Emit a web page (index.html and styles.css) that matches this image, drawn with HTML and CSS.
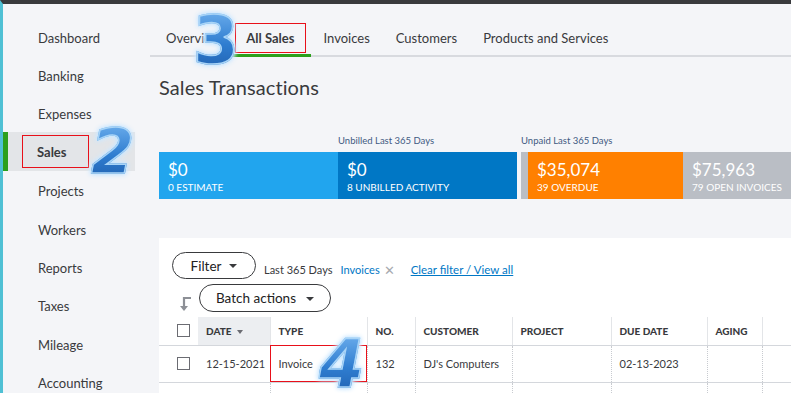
FILE: index.html
```html
<!DOCTYPE html>
<html lang="en">
<head>
    <meta charset="UTF-8">
    <title>Sales Transactions</title>
    <link rel="stylesheet" href="styles.css">
</head>
<body>

<div class="app">
    <nav class="sidebar">
        <a class="navItem">Dashboard</a>
        <a class="navItem">Banking</a>
        <a class="navItem">Expenses</a>
        <a class="navItem active"><span class="marked">Sales</span></a>
        <a class="navItem">Projects</a>
        <a class="navItem">Workers</a>
        <a class="navItem">Reports</a>
        <a class="navItem">Taxes</a>
        <a class="navItem">Mileage</a>
        <a class="navItem">Accounting</a>
    </nav>

    <main class="main">
        <div class="tabs">
            <div class="tab tabFirst">Overview</div>
            <div class="tab current"><span class="marked">All Sales</span></div>
            <div class="tab">Invoices</div>
            <div class="tab">Customers</div>
            <div class="tab">Products and Services</div>
        </div>

        <div class="content">
            <h1 class="pageTitle">Sales Transactions</h1>

            <div class="money">
                <div class="group">
                    <div class="groupLabel"></div>
                    <div class="bars">
                        <div class="bar estimate"><div class="amount">$0</div><div class="caption">0 ESTIMATE</div></div>
                    </div>
                </div>
                <div class="group">
                    <div class="groupLabel">Unbilled Last 365 Days</div>
                    <div class="bars">
                        <div class="bar unbilled"><div class="amount">$0</div><div class="caption">8 UNBILLED ACTIVITY</div></div>
                    </div>
                </div>
                <div class="group grow">
                    <div class="groupLabel">Unpaid Last 365 Days</div>
                    <div class="bars">
                        <div class="bar strip"></div>
                        <div class="bar overdue"><div class="amount">$35,074</div><div class="caption">39 OVERDUE</div></div>
                        <div class="bar open"><div class="amount">$75,963</div><div class="caption">79 OPEN INVOICES</div></div>
                    </div>
                </div>
            </div>

            <div class="panel">
                <div class="filterRow">
                    <button class="pill filterBtn">Filter <span class="caret"></span></button>
                    <span class="filterText">Last 365 Days</span>
                    <span class="filterTag">Invoices</span>
                    <span class="filterX">&#x2715;</span>
                    <a class="clearLink">Clear filter / View all</a>
                </div>
                <div class="batchRow">
                    <svg class="batchIcon" width="14" height="16" viewBox="0 0 14 16">
                        <path d="M12 2 H5 V11" fill="none" stroke="#8d9096" stroke-width="2.2"/>
                        <path d="M1 10 L9 10 L5 15 Z" fill="#8d9096"/>
                    </svg>
                    <button class="pill batchBtn">Batch actions <span class="caret"></span></button>
                </div>

                <table class="grid">
                    <thead>
                        <tr>
                            <th class="colCheck"><span class="box"></span></th>
                            <th class="colDate sorted">DATE <span class="sortCaret"></span></th>
                            <th class="colType">TYPE</th>
                            <th class="colNo">NO.</th>
                            <th class="colCustomer">CUSTOMER</th>
                            <th class="colProject">PROJECT</th>
                            <th class="colDue">DUE DATE</th>
                            <th class="colAging">AGING</th>
                            <th></th>
                        </tr>
                    </thead>
                    <tbody>
                        <tr>
                            <td class="colCheck"><span class="box"></span></td>
                            <td>12-15-2021</td>
                            <td class="marked">Invoice</td>
                            <td>132</td>
                            <td>DJ's Computers</td>
                            <td></td>
                            <td>02-13-2023</td>
                            <td></td>
                            <td></td>
                        </tr>
                        <tr>
                            <td class="colCheck"></td>
                            <td></td><td></td><td></td><td></td><td></td><td></td><td></td><td></td>
                        </tr>
                    </tbody>
                </table>
            </div>
        </div>
    </main>

    <!-- step numbers drawn over the screenshot -->
    <span class="step stepTwo">2</span>
    <span class="step stepThree">3</span>
    <span class="step stepFour">4</span>
</div>

</body>
</html>
```

FILE: styles.css
```css
body {
    margin: 0;
    padding: 0;
    font-family: 'Lato', 'Open Sans', sans-serif;
    color: #393a3d;
    background: #f4f5f8;
    overflow: hidden;
}

.app {
    position: relative;
    display: flex;
    height: 393px;
    box-sizing: border-box;
    border-top: 4px solid #393a3d;
    border-left: 3px solid #4fc0d4;
    overflow: hidden;
}

/* sidebar */
.sidebar {
    width: 132px;
    flex: none;
    display: flex;
    flex-direction: column;
    padding-top: 13px;
}

.navItem {
    flex: none;
    display: flex;
    align-items: center;
    height: 38.4px;
    padding-left: 35px;
    padding-top: 3px;
    font-size: 13px;
    color: #393a3d;
    box-sizing: border-box;
}

.navItem.active {
    background: #e3e5e8;
    border-left: 5px solid #2ca01c;
    padding-left: 15px;
    padding-top: 0;
    font-weight: 700;
}

.navItem.active .marked {
    outline: 1px solid #e8101a;
    padding: 8px 21px 7px 14px;
}

/* main */
.main {
    flex: 1;
    min-width: 0;
    padding-left: 15px;
    display: flex;
    flex-direction: column;
}

.tabs {
    flex: none;
    display: flex;
    height: 53px;
    border-bottom: 2px solid #d8dadf;
    box-sizing: border-box;
    padding-left: 2px;
}

.tab {
    display: flex;
    align-items: flex-end;
    padding: 0 13px 8px;
    font-size: 13px;
    white-space: nowrap;
    margin-bottom: -2px;
    border-bottom: 3px solid transparent;
}

.tabFirst {
    padding-left: 14px;
    padding-right: 9px;
}

.tab.current {
    font-weight: 700;
    border-bottom-color: #2ca01c;
    padding-left: 16px;
    padding-right: 16px;
}

.tab.current .marked {
    outline: 1px solid #e8101a;
    padding: 6px 10px;
    margin: -6px -10px;
}

.content {
    padding-left: 9px;
    display: flex;
    flex-direction: column;
    flex: 1;
}

.pageTitle {
    margin: 17px 0 0;
    font-size: 20px;
    font-weight: 400;
    line-height: 26px;
    color: #393a3d;
    letter-spacing: 0.1px;
}

/* money bar */
.money {
    display: flex;
    margin-top: 35px;
}

.group {
    display: flex;
    flex-direction: column;
}

.group.grow {
    flex: 1;
    margin-left: 4px;
}

.groupLabel {
    height: 17px;
    font-size: 9.5px;
    color: #3f5a82;
    line-height: 12px;
}

.bars {
    display: flex;
    height: 47px;
}

.bar {
    color: #fff;
    padding: 8px 0 0 9px;
    box-sizing: border-box;
}

.estimate { width: 179px; background: #21a5ee; }
.unbilled { width: 179px; background: #0077c5; }
.strip { width: 7px; padding: 0; background: #babec5; }
.overdue { width: 155px; background: #ff8000; }
.open { flex: 1; background: #babec5; }

.amount {
    font-size: 17px;
    line-height: 20px;
}

.caption {
    font-size: 10px;
    line-height: 12px;
    margin-top: 1px;
    white-space: nowrap;
}

/* white panel */
.panel {
    margin-top: 39px;
    flex: 1;
    background: #fff;
    padding-top: 14px;
}

.filterRow {
    display: flex;
    align-items: flex-end;
    height: 27px;
    padding-left: 13px;
    font-size: 11px;
    line-height: 14px;
}

.pill {
    display: inline-flex;
    align-items: center;
    justify-content: center;
    gap: 8px;
    background: #fff;
    border: 1px solid #393a3d;
    border-radius: 15px;
    font-family: inherit;
    font-size: 13.5px;
    font-weight: 400;
    color: #222;
    box-sizing: border-box;
    padding: 0;
    flex: none;
}

.filterBtn {
    width: 84px;
    height: 27px;
    margin-right: 8px;
    align-self: flex-start;
}

.caret {
    width: 0;
    height: 0;
    border-left: 4px solid transparent;
    border-right: 4px solid transparent;
    border-top: 4px solid #393a3d;
    margin-top: 1px;
}

.filterText {
    padding-bottom: 2px;
}

.filterTag {
    color: #0077c5;
    margin-left: 8px;
    padding-bottom: 2px;
}

.filterX {
    color: #a7aaaf;
    font-size: 13px;
    line-height: 14px;
    margin-left: 4px;
    padding-bottom: 2px;
}

.clearLink {
    color: #0077c5;
    text-decoration: underline;
    font-size: 11.5px;
    margin-left: 16px;
    padding-bottom: 2px;
}

.batchRow {
    display: flex;
    align-items: flex-end;
    padding-left: 20px;
    margin-top: 5px;
}

.batchIcon {
    margin-right: 6px;
}

.batchBtn {
    width: 132px;
    height: 28px;
    gap: 10px;
}

/* table */
.grid {
    border-collapse: collapse;
    margin-top: 5px;
    width: 100%;
    table-layout: fixed;
    font-size: 11px;
    color: #393a3d;
}

.grid th {
    height: 28px;
    text-align: left;
    font-size: 10px;
    font-weight: 900;
    padding: 0 0 0 8px;
    border-bottom: 1px solid #d4d7dc;
    border-left: 1px solid #e3e5e8;
    box-sizing: border-box;
}

.grid td {
    height: 36px;
    padding: 0 0 0 8px;
    border-bottom: 1px solid #d4d7dc;
    border-left: 1px dotted #c8cbd0;
}

.grid .colCheck {
    width: 39px;
    border-left: none;
    padding-left: 18px;
}

.grid tbody tr:last-child td {
    border-bottom: none;
}

.grid th.colDate { width: 72px; }
.grid th.colType { width: 97px; }
.grid th.colNo { width: 48px; }
.grid th.colCustomer { width: 97px; }
.grid th.colProject { width: 99px; }
.grid th.colDue { width: 96px; }
.grid th.colAging { width: 55px; }

.grid th:nth-child(2),
.grid td:nth-child(2) {
    border-left: none;
}

.sorted {
    background: #eceef1;
}

.sortCaret {
    display: inline-block;
    width: 0;
    height: 0;
    border-left: 3px solid transparent;
    border-right: 3px solid transparent;
    border-top: 4px solid #6b6c72;
    margin-left: 3px;
    vertical-align: middle;
}

.box {
    display: block;
    width: 11px;
    height: 11px;
    border: 1px solid #6b6c72;
}

.grid td.marked {
    outline: 1px solid #e8101a;
    outline-offset: -1px;
}

/* blue step numbers */
.step {
    position: absolute;
    font-family: 'DejaVu Sans', sans-serif;
    font-weight: 700;
    font-style: italic;
    font-size: 62px;
    line-height: 1;
    color: #2f78c8;
    background: linear-gradient(180deg, #6fb0ee 0%, #2f7dd0 55%, #1f5fae 100%);
    -webkit-background-clip: text;
    background-clip: text;
    -webkit-text-fill-color: transparent;
    -webkit-text-stroke: 1.5px #a8d4f7;
    filter: drop-shadow(0 0 2px #bfe2ff) drop-shadow(0 0 2px #d6ecff);
}

.stepTwo {
    left: 88px;
    top: 117px;
}

.stepThree {
    left: 190px;
    top: 4px;
    font-style: normal;
    font-size: 66px;
}

.stepFour {
    left: 316px;
    top: 328px;
    font-size: 65px;
}
```
